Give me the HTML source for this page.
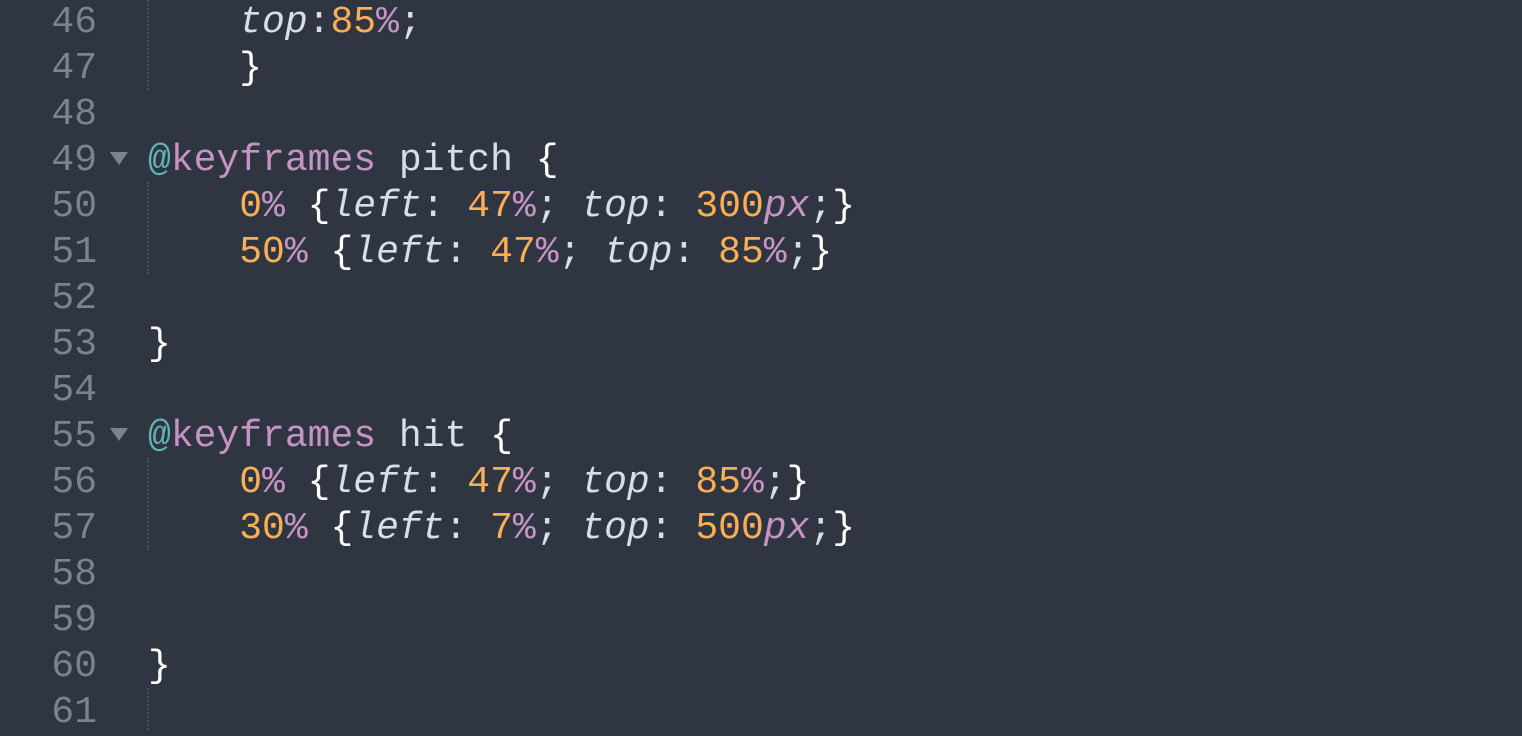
<!DOCTYPE html>
<html><head><style>
html,body{margin:0;padding:0;background:#303641;width:1522px;height:730px;overflow:hidden}
.wrap{position:absolute;top:0;left:0;font-family:"Liberation Mono",monospace;font-size:38px;line-height:46px;color:#d8dee9}
.ln{position:absolute;left:0;width:97px;text-align:right;color:#7d838c}
.code{position:absolute;left:148px;width:1300px}
.row{height:46px;position:relative;white-space:pre}
.k{color:#c594c5}.a{color:#5fb3b3}.o{color:#f9ae58}.p{color:#c594c5}.w{color:#fff}.i{font-style:italic;color:#d8dee9}
.tri{position:absolute;left:110px;width:0;height:0;border-left:9px solid transparent;border-right:9px solid transparent;border-top:13px solid #7d838c}
.g{position:absolute;left:147px;width:0;border-left:2px dotted #4a515c}
</style></head><body>
<div class="g" style="top:0;height:90px"></div>
<div class="g" style="top:182px;height:92px"></div>
<div class="g" style="top:458px;height:92px"></div>
<div class="g" style="top:688px;height:42px"></div>
<div class="tri" style="top:152px"></div>
<div class="tri" style="top:428px"></div>
<div class="wrap"><div class="ln"><div class="row">46</div><div class="row">47</div><div class="row">48</div><div class="row">49</div><div class="row">50</div><div class="row">51</div><div class="row">52</div><div class="row">53</div><div class="row">54</div><div class="row">55</div><div class="row">56</div><div class="row">57</div><div class="row">58</div><div class="row">59</div><div class="row">60</div><div class="row">61</div></div><div class="code"><div class="row">    <span class="i">top</span>:<span class="o">85</span><span class="p">%</span>;</div><div class="row">    <span class="w">}</span></div><div class="row"></div><div class="row"><span class="a">@</span><span class="k">keyframes</span> pitch <span class="w">{</span></div><div class="row">    <span class="o">0</span><span class="p">%</span> <span class="w">{</span><span class="i">left</span>: <span class="o">47</span><span class="p">%</span>; <span class="i">top</span>: <span class="o">300</span><span class="p" style="font-style:italic">px</span>;<span class="w">}</span></div><div class="row">    <span class="o">50</span><span class="p">%</span> <span class="w">{</span><span class="i">left</span>: <span class="o">47</span><span class="p">%</span>; <span class="i">top</span>: <span class="o">85</span><span class="p">%</span>;<span class="w">}</span></div><div class="row"></div><div class="row"><span class="w">}</span></div><div class="row"></div><div class="row"><span class="a">@</span><span class="k">keyframes</span> hit <span class="w">{</span></div><div class="row">    <span class="o">0</span><span class="p">%</span> <span class="w">{</span><span class="i">left</span>: <span class="o">47</span><span class="p">%</span>; <span class="i">top</span>: <span class="o">85</span><span class="p">%</span>;<span class="w">}</span></div><div class="row">    <span class="o">30</span><span class="p">%</span> <span class="w">{</span><span class="i">left</span>: <span class="o">7</span><span class="p">%</span>; <span class="i">top</span>: <span class="o">500</span><span class="p" style="font-style:italic">px</span>;<span class="w">}</span></div><div class="row"></div><div class="row"></div><div class="row"><span class="w">}</span></div><div class="row"></div></div></div>
</body></html>
